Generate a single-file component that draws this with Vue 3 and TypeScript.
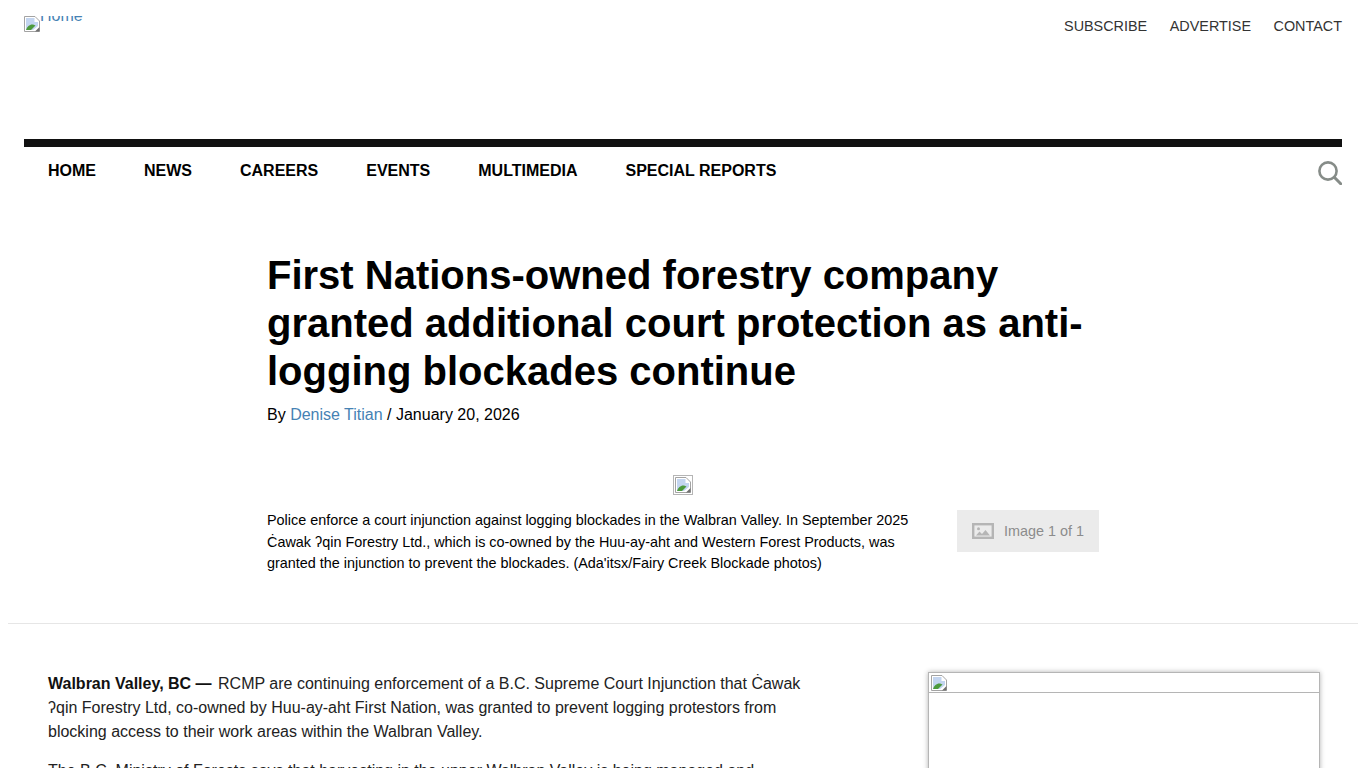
<script setup lang="ts">
const utilLinks = ['SUBSCRIBE', 'ADVERTISE', 'CONTACT']
const navLinks = ['HOME', 'NEWS', 'CAREERS', 'EVENTS', 'MULTIMEDIA', 'SPECIAL REPORTS']
</script>

<template>
  <div class="page">
    <header class="site-header">
      <div class="site-header__top">
        <a class="logo" href="#">
          <svg class="broken" viewBox="0 0 16 16" aria-hidden="true">
            <path d="M.5.500h10.500l4.500 4.500v10.500H.5z" fill="#fff" stroke="#a3a3a3" />
            <path d="M2 2h8.500v4H14v4l-5 4H2z" fill="#c3d5f0" />
            <path d="M2 14c1-3.500 4-6 7-5.500l2.500 1L7 14z" fill="#4c9a3c" />
            <path d="M11 15.500l4.500-4.500v4.500z" fill="#707070" />
          </svg>
          <span class="logo__alt"><span>Home</span></span>
        </a>
        <nav class="util-nav">
          <a v-for="link in utilLinks" :key="link" href="#">{{ link }}</a>
        </nav>
      </div>
      <div class="site-header__nav">
        <nav class="main-nav">
          <a v-for="link in navLinks" :key="link" href="#">{{ link }}</a>
        </nav>
        <svg class="search" viewBox="0 0 24 24" aria-label="Search">
          <circle cx="10" cy="10" r="8.600" fill="none" stroke="#868c88" stroke-width="2.600" />
          <path d="M16.300 16.300l6.400 6.400" stroke="#868c88" stroke-width="3" stroke-linecap="round" />
        </svg>
      </div>
    </header>

    <section class="headline">
      <h1>First Nations-owned forestry company granted additional court protection as anti-logging blockades continue</h1>
      <p class="byline">By <a href="#">Denise Titian</a> / January 20, 2026</p>
      <div class="lead-image">
        <span class="lead-image__frame">
          <svg class="broken" viewBox="0 0 16 16" aria-hidden="true">
            <path d="M.5.500h10.500l4.500 4.500v10.500H.5z" fill="#fff" stroke="#a3a3a3" />
            <path d="M2 2h8.500v4H14v4l-5 4H2z" fill="#c3d5f0" />
            <path d="M2 14c1-3.500 4-6 7-5.500l2.500 1L7 14z" fill="#4c9a3c" />
            <path d="M11 15.500l4.500-4.500v4.500z" fill="#707070" />
          </svg>
        </span>
      </div>
      <div class="caption-row">
        <p class="caption">Police enforce a court injunction against logging blockades in the Walbran Valley. In September 2025 Ċawak ʔqin Forestry Ltd., which is co-owned by the Huu-ay-aht and Western Forest Products, was granted the injunction to prevent the blockades. (Ada'itsx/Fairy Creek Blockade photos)</p>
        <div class="gallery-btn">
          <svg viewBox="0 0 22 16" aria-hidden="true">
            <rect x="1.200" y="1.200" width="19.600" height="13.600" fill="none" stroke="#b5b5b5" stroke-width="2.400" />
            <path d="M4 12.500l3.500-4 2.500 2.500 3.500-4 4.500 5.500z" fill="#b5b5b5" />
            <circle cx="6.500" cy="5.800" r="1.500" fill="#b5b5b5" />
          </svg>
          <span>Image 1 of 1</span>
        </div>
      </div>
    </section>

    <hr class="divider" />

    <section class="content">
      <article class="story">
        <p><strong>Walbran Valley, BC —</strong> <span class="story__lead">RCMP are continuing enforcement of a B.C. Supreme Court Injunction that Ċawak ʔqin Forestry Ltd, co-owned by Huu-ay-aht First Nation, was granted to prevent logging protestors from blocking access to their work areas within the Walbran Valley.</span></p>
        <p>The B.C. Ministry of Forests says that harvesting in the upper Walbran Valley is being managed and</p>
      </article>
      <aside class="ad">
        <div class="ad__image">
          <svg class="broken" viewBox="0 0 16 16" aria-hidden="true">
            <path d="M.5.500h10.500l4.500 4.500v10.500H.5z" fill="#fff" stroke="#a3a3a3" />
            <path d="M2 2h8.500v4H14v4l-5 4H2z" fill="#c3d5f0" />
            <path d="M2 14c1-3.500 4-6 7-5.500l2.500 1L7 14z" fill="#4c9a3c" />
            <path d="M11 15.500l4.500-4.500v4.500z" fill="#707070" />
          </svg>
        </div>
      </aside>
    </section>
  </div>
</template>

<style>
html,
body {
  overflow: hidden;
  height: 768px;
  background: #fff;
}
</style>

<style scoped>
.page {
  height: 768px;
  overflow: hidden;
  font-family: "Liberation Sans", Arial, sans-serif;
  font-size: 16px;
  color: #000;
}

a {
  text-decoration: none;
}

.broken {
  display: block;
  width: 16px;
  height: 16px;
  flex: none;
}

.site-header {
  padding: 0 24px;
}

.site-header__top {
  display: flex;
  justify-content: space-between;
  height: 139px;
}

.logo {
  display: flex;
  align-self: flex-start;
  margin-top: 16px;
  color: #4682b4;
}

.logo__alt {
  display: block;
  height: 16px;
  overflow: hidden;
  line-height: 18px;
}

.logo__alt span {
  display: block;
  margin-top: -9px;
}

.util-nav {
  display: flex;
  gap: 22.500px;
  margin-top: 17px;
  align-self: flex-start;
  font-size: 14.400px;
  line-height: 18px;
}

.util-nav a {
  color: #333;
}

.site-header__nav {
  display: flex;
  justify-content: space-between;
  align-items: flex-start;
  border-top: 8px solid #111;
  padding-left: 24px;
}

.main-nav {
  display: flex;
  gap: 48px;
  padding-top: 15px;
  line-height: 18px;
  font-weight: 700;
}

.main-nav a {
  color: #000;
}

.search {
  width: 24px;
  height: 24px;
  margin-top: 14px;
}

.headline {
  width: 832px;
  margin: 0 auto;
  padding-top: 66px;
}

.headline h1 {
  margin: 0;
  font-size: 40px;
  line-height: 48px;
  font-weight: 700;
}

.byline {
  margin: 8px 0 0;
  line-height: 24px;
}

.byline a {
  color: #4682b4;
}

.lead-image {
  display: flex;
  justify-content: center;
  margin-top: 48px;
}

.lead-image__frame {
  display: block;
  padding: 1px;
  border: 1px solid #b5b5b5;
}

.caption-row {
  display: flex;
  justify-content: space-between;
  align-items: flex-start;
  margin-top: 15px;
}

.caption {
  width: 650px;
  margin: 0;
  font-size: 14.400px;
  line-height: 21.500px;
}

.gallery-btn {
  display: flex;
  align-items: center;
  gap: 10px;
  width: 142px;
  height: 42px;
  padding-left: 15px;
  box-sizing: border-box;
  background: #ebebeb;
  color: #8c8c8c;
  font-size: 14.400px;
}

.gallery-btn svg {
  width: 22px;
  height: 16px;
}

.divider {
  margin: 48px 8px 0;
  border: 0;
  border-top: 1px solid #e6e6e6;
}

.content {
  display: flex;
  justify-content: space-between;
  padding: 48px 46px 0 48px;
}

.story {
  width: 760px;
  line-height: 24px;
  color: #222;
}

.story p {
  margin: 0 0 15px;
}

.story strong {
  color: #111;
}

.story__lead {
  margin-left: 2px;
}

.ad {
  width: 392px;
  height: 300px;
  box-sizing: border-box;
  border: 1px solid #b5b5b5;
  box-shadow: 0 0 5px rgba(0, 0, 0, 0.3);
}

.ad__image {
  height: 20px;
  box-sizing: border-box;
  padding: 2px 2px 0;
  border-bottom: 1px solid #b5b5b5;
}
</style>
